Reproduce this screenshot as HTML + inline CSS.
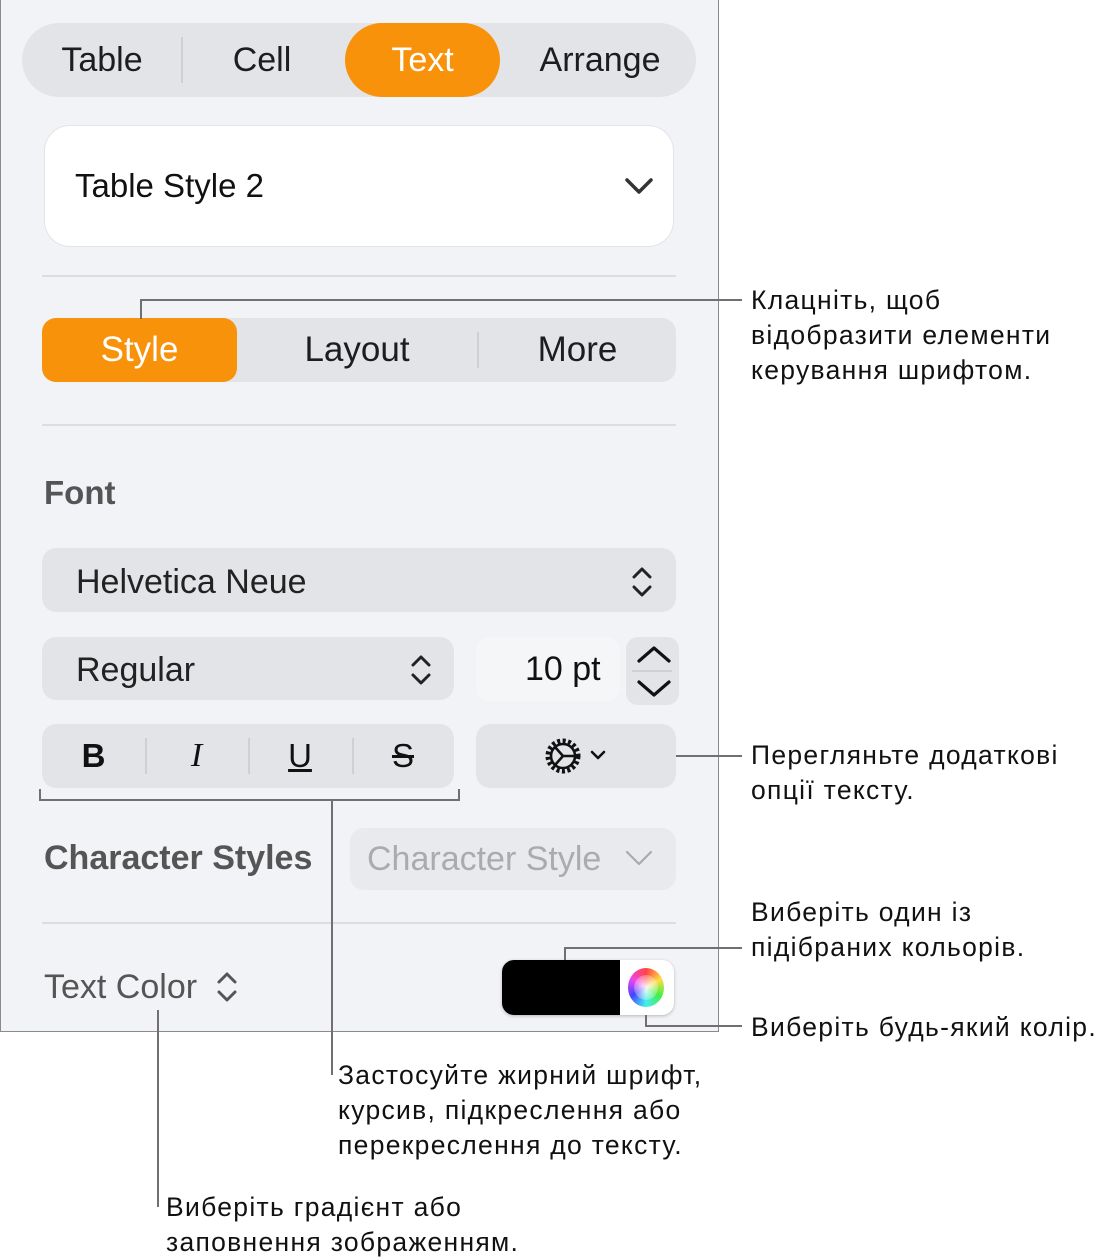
<!DOCTYPE html>
<html><head><meta charset="utf-8"><style>
*{margin:0;padding:0;box-sizing:border-box}
body{width:1109px;height:1258px;background:#fff;position:relative;overflow:hidden;font-family:"Liberation Sans","DejaVu Sans",sans-serif;color:#1d1d1f}
.a{position:absolute}
#panel{left:0;top:0;width:719px;height:1032px;background:#f2f3f6;border:1.5px solid #8a8a8a;border-top:none}
.seg{background:#e3e4e8;border-radius:36px}
.pill{display:flex;align-items:center;justify-content:center}
.ln{background:#707070}
.note{font-size:26.5px;line-height:35px;color:#111;letter-spacing:1.3px;white-space:nowrap}
.sep{background:#dcdde0;height:2px}
.vsep{background:#cfd0d4;width:2px}
</style></head><body>
<div id="panel" class="a"></div>

<div class="a seg" style="left:22px;top:23px;width:674px;height:74px;border-radius:37px"></div>
<div class="a vsep" style="left:181px;top:37px;height:46px"></div>
<div class="a" style="left:345px;top:23px;width:155px;height:74px;border-radius:37px;background:#f7920a"></div>
<div class="a pill" style="left:22px;top:23px;width:160px;height:74px;font-size:34px">Table</div>
<div class="a pill" style="left:182px;top:23px;width:160px;height:74px;font-size:34px">Cell</div>
<div class="a pill" style="left:345px;top:23px;width:155px;height:74px;font-size:34px;color:#fff">Text</div>
<div class="a pill" style="left:500px;top:23px;width:200px;height:74px;font-size:34px">Arrange</div>

<div class="a" style="left:44px;top:125px;width:630px;height:122px;background:#fff;border-radius:26px;border:1.5px solid #e3e4e7"></div>
<div class="a" style="left:75px;top:167px;font-size:33px;color:#111">Table Style 2</div>
<svg class="a" style="left:624px;top:176px" width="30" height="20"><path d="M3 4 L15 16 L27 4" fill="none" stroke="#333" stroke-width="3.5" stroke-linecap="round" stroke-linejoin="round"/></svg>
<div class="a sep" style="left:42px;top:275px;width:634px"></div>

<div class="a" style="left:42px;top:318px;width:634px;height:64px;background:#e3e4e8;border-radius:14px"></div>
<div class="a" style="left:42px;top:318px;width:195px;height:64px;background:#f7920a;border-radius:14px"></div>
<div class="a vsep" style="left:477px;top:332px;height:36px"></div>
<div class="a pill" style="left:42px;top:318px;width:195px;height:64px;font-size:35px;color:#fff">Style</div>
<div class="a pill" style="left:237px;top:318px;width:240px;height:64px;font-size:35px">Layout</div>
<div class="a pill" style="left:479px;top:318px;width:197px;height:64px;font-size:35px">More</div>
<div class="a sep" style="left:42px;top:424px;width:634px"></div>

<div class="a" style="left:44px;top:474px;font-size:33px;font-weight:bold;color:#555">Font</div>

<div class="a" style="left:42px;top:548px;width:634px;height:64px;background:#e3e4e8;border-radius:14px"></div>
<div class="a" style="left:76px;top:563px;font-size:34px;color:#222">Helvetica Neue</div>
<svg class="a" style="left:630px;top:566px" width="24" height="32"><path d="M4 11 L12 3 L20 11 M4 21 L12 29 L20 21" fill="none" stroke="#222" stroke-width="3" stroke-linecap="round" stroke-linejoin="round"/></svg>

<div class="a" style="left:42px;top:637px;width:412px;height:63px;background:#e3e4e8;border-radius:14px"></div>
<div class="a" style="left:76px;top:651px;font-size:34px;color:#222">Regular</div>
<svg class="a" style="left:409px;top:654px" width="24" height="32"><path d="M4 11 L12 3 L20 11 M4 21 L12 29 L20 21" fill="none" stroke="#222" stroke-width="3" stroke-linecap="round" stroke-linejoin="round"/></svg>
<div class="a" style="left:476px;top:637px;width:144px;height:64px;background:#f5f6f8;border-radius:14px"></div>
<div class="a" style="left:525px;top:650px;font-size:34px;color:#111">10 pt</div>
<div class="a" style="left:626px;top:637px;width:53px;height:68px;background:#e3e4e8;border-radius:12px"></div>
<div class="a" style="left:632px;top:670px;width:40px;height:1.5px;background:#cfd0d4"></div>
<svg class="a" style="left:634px;top:642px" width="40" height="60"><path d="M5 19 L20 6 L35 19 M5 40 L20 53 L35 40" fill="none" stroke="#111" stroke-width="3.2" stroke-linecap="round" stroke-linejoin="round"/></svg>

<div class="a" style="left:42px;top:724px;width:412px;height:64px;background:#e3e4e8;border-radius:14px"></div>
<div class="a vsep" style="left:145px;top:738px;height:36px"></div>
<div class="a vsep" style="left:248px;top:738px;height:36px"></div>
<div class="a vsep" style="left:352px;top:738px;height:36px"></div>
<div class="a pill" style="left:42px;top:724px;width:103px;height:64px;font-size:33px;font-weight:bold;color:#111">B</div>
<div class="a pill" style="left:145px;top:724px;width:103px;height:64px;font-size:34px;font-style:italic;font-family:'Liberation Serif',serif;color:#111">I</div>
<div class="a pill" style="left:248px;top:724px;width:104px;height:64px;font-size:33px;text-decoration:underline;color:#111">U</div>
<div class="a pill" style="left:352px;top:724px;width:102px;height:64px;font-size:33px;text-decoration:line-through;color:#111">S</div>

<div class="a" style="left:476px;top:724px;width:200px;height:64px;background:#e3e4e8;border-radius:14px"></div>
<svg class="a" style="left:540px;top:734px" width="76" height="44"><g fill="none" stroke="#111" stroke-width="2.6"><circle cx="23" cy="22" r="15" stroke-dasharray="3 2.4" stroke-width="5"/><circle cx="23" cy="22" r="12"/><path d="M23 22 L35 22 M23 22 L15 13 M23 22 L15 31"/><path d="M52 18 L58 24 L64 18" stroke-linecap="round" stroke-linejoin="round"/></g></svg>

<div class="a" style="left:44px;top:839px;font-size:34px;font-weight:bold;color:#555">Character Styles</div>
<div class="a" style="left:350px;top:828px;width:326px;height:62px;background:#e9eaed;border-radius:14px"></div>
<div class="a" style="left:367px;top:840px;font-size:34px;color:#aaabae">Character Style</div>
<svg class="a" style="left:624px;top:848px" width="32" height="20"><path d="M3 4 L15 16 L27 4" fill="none" stroke="#aaa" stroke-width="2.2" stroke-linecap="round" stroke-linejoin="round"/></svg>
<div class="a sep" style="left:42px;top:922px;width:634px"></div>

<div class="a" style="left:44px;top:968px;font-size:34px;color:#555">Text Color</div>
<svg class="a" style="left:215px;top:971px" width="24" height="32"><path d="M4 11 L12 3 L20 11 M4 21 L12 29 L20 21" fill="none" stroke="#555" stroke-width="3" stroke-linecap="round" stroke-linejoin="round"/></svg>
<div class="a" style="left:502px;top:960px;width:172px;height:55px;background:#fff;border-radius:12px;box-shadow:0 1px 3px rgba(0,0,0,.25)"></div>
<div class="a" style="left:502px;top:960px;width:118px;height:55px;background:#000;border-radius:12px 0 0 12px"></div>
<div class="a" style="left:628px;top:968px;width:36px;height:39px;border-radius:50%;background:conic-gradient(#f44,#fd4,#4e4,#4ee,#44f,#e4e,#f44)"></div>
<div class="a" style="left:634px;top:975px;width:24px;height:25px;border-radius:50%;background:radial-gradient(rgba(255,255,255,.9),rgba(255,255,255,0))"></div>

<div class="a ln" style="left:140px;top:299px;width:2px;height:20px"></div>
<div class="a ln" style="left:140px;top:299px;width:602px;height:2px"></div>
<div class="a ln" style="left:676px;top:755px;width:66px;height:2px"></div>
<div class="a ln" style="left:564px;top:947px;width:2px;height:13px"></div>
<div class="a ln" style="left:564px;top:947px;width:178px;height:2px"></div>
<div class="a ln" style="left:645px;top:1015px;width:2px;height:12px"></div>
<div class="a ln" style="left:645px;top:1025px;width:97px;height:2px"></div>
<div class="a ln" style="left:39px;top:799px;width:421px;height:2px"></div>
<div class="a ln" style="left:39px;top:789px;width:2px;height:12px"></div>
<div class="a ln" style="left:458px;top:789px;width:2px;height:12px"></div>
<div class="a ln" style="left:331px;top:799px;width:2px;height:276px"></div>
<div class="a ln" style="left:157px;top:1010px;width:2px;height:197px"></div>

<div class="a note" style="left:751px;top:283px">Клацніть, щоб<br>відобразити елементи<br>керування шрифтом.</div>
<div class="a note" style="left:751px;top:738px">Перегляньте додаткові<br>опції тексту.</div>
<div class="a note" style="left:751px;top:895px">Виберіть один із<br>підібраних кольорів.</div>
<div class="a note" style="left:751px;top:1010px">Виберіть будь-який колір.</div>
<div class="a note" style="left:338px;top:1058px">Застосуйте жирний шрифт,<br>курсив, підкреслення або<br>перекреслення до тексту.</div>
<div class="a note" style="left:166px;top:1190px">Виберіть градієнт або<br>заповнення зображенням.</div>
</body></html>
